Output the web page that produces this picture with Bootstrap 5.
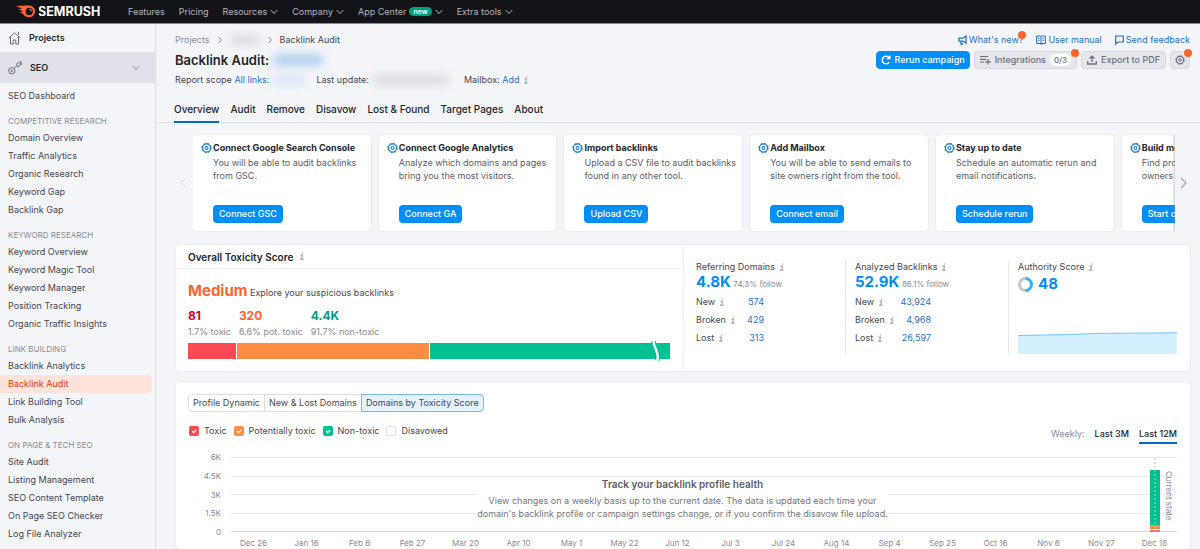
<!DOCTYPE html>
<html lang="en">
<head>
<meta charset="utf-8">
<meta name="viewport" content="width=device-width, initial-scale=1">
<title>Backlink Audit</title>
<link href="https://cdn.jsdelivr.net/npm/bootstrap@5.3.0/dist/css/bootstrap.min.css" rel="stylesheet">
<style>
body{font-family:Inter,"Liberation Sans",sans-serif;font-size:9px;line-height:12px;color:#45474f;background:#f4f5f9;overflow:hidden}
a{text-decoration:none;color:#2273c9}
svg{display:block;flex:none}
.ink{color:#22252c}
.grey{color:#878a95}
.hint{color:#a4a7b3;width:6px;height:9px}
.topbar{background:#131417;height:24px;border-bottom:1px solid #8a8c93;padding-left:16px}
.topbar a{color:#b4b6bd;gap:3px}
.topbar ul{gap:14px;margin-left:23px}
.pill-new{background:#009f81;color:#fff;border-radius:6px;font-size:7px;line-height:9px;padding:0 4px;font-weight:600}
.side{flex:0 0 156px;border-right:1px solid #dcdee6}
.side-main{height:28px;padding-left:8px;gap:8px;font-weight:600;color:#22252c}
.side-seo{background:#e0e1e9;height:31px;padding-right:15px}
.side h6{font-size:8px;line-height:16px;margin:0;padding:8px 0 0 8px;font-weight:400;color:#878a95}
.side-item{display:block;line-height:18px;padding-left:8px;color:#45474f}
.side-item.current{color:#dd3b0a;background:#ffe3da;border-radius:0 4px 4px 0;margin-right:3px}
.inset{padding:0 10px 0 19px}
.crumbs{height:20px;margin-top:6px}
.trail{gap:7px}
.help-links{gap:13px}
.help-links a{gap:2px}
.smudge{display:inline-block;height:10px;filter:blur(4px);border-radius:4px;background:#dbdce1}
.smudge.site{width:30px}
.smudge.name{width:50px;height:12px;background:#b4d3ee}
.smudge.scope{width:32px;background:#d8e6f5;margin:0 11px 0 4px}
.smudge.date{width:76px;margin:0 15px 0 4px}
h1{font-size:13px;line-height:20px;font-weight:600;margin:0}
.meta-line{height:20px}
.tool-row{gap:4px}
.tool-btn{height:18px;border-radius:4px;border:1px solid #d6d8e0;background:#e6e7ed;color:#6c6e79;font-weight:500;font-size:9px;line-height:12px;padding:0 5px;gap:4px}
.tool-btn.go{background:#008ff8;border-color:#008ff8;color:#fff;padding:0 4px}
.count{background:#fff;border-radius:6px;padding:0 4px;font-size:8px}
.dot{position:absolute;width:8px;height:8px;border-radius:50%;background:#ff642d;top:-3px;right:-3px}
.tabs{border-bottom:1px solid #e0e2ea;padding-left:18px;gap:11px;margin-top:10px;font-size:10px;font-weight:500}
.tabs a{color:#22252c;line-height:18px;padding-bottom:3px;border-bottom:2px solid transparent;margin-bottom:-1px}
.tabs a.current{border-color:#006dca}
.carousel-line{margin:11px 7px 0 19px;height:98px}
.arrow{flex:0 0 18px;background:none;border:0;padding:0 0 0 4px}
.strip{gap:8px;overflow:hidden;padding:1px 0}
.tip{flex:0 0 18.1%;background:#fff;border-radius:4px;box-shadow:0 0 2px #d3d6df;padding:7px 3px 8px 8px;gap:1px}
.tip>svg{color:#0f7ad8}
.tip h2{font-size:9px;line-height:12px;font-weight:700;color:#22252c;margin:0 0 2px;white-space:nowrap}
.tip p{margin:0;line-height:13px;color:#5b5d67}
.tip-btn{background:#008ff8;color:#fff;border:0;border-radius:4px;height:18px;padding:0 6px;font-weight:500;line-height:12px;white-space:nowrap}
.fade-edge{position:absolute;right:0;top:1px;bottom:1px;width:3px;background:linear-gradient(90deg,transparent,#8a8d9860)}
.panel{background:#fff;border-radius:4px;box-shadow:0 0 2px #d3d6df;margin:0 10px 0 20px}
.score{margin-top:13px;height:126px}
.score-head{height:24px;border-bottom:1px solid #eff0f4;padding-left:12px;font-size:10px;font-weight:600;gap:6px}
.level-line{padding:13px 0 0 12px}
.level{font-size:15px;line-height:18px;font-weight:700;color:#ff642d}
.parts{gap:8px;padding:8px 0 0 12px;line-height:16px}
.num{font-size:12px;font-weight:700}
.big{font-size:15px;line-height:18px;font-weight:700;color:#008ff8}
.small-note{font-size:8px;color:#878a95}
.bar{height:16px;gap:1px;margin:3px 13px 0 12px;position:relative}
.bar svg{position:absolute;right:9px;top:-2px}
.stats{display:grid;grid-template-columns:149fr 163fr 169fr;padding:16px 13px 17px 12px;border-left:1px solid #eff0f4}
.stats>div+div{border-left:1px solid #e6e8ee;padding-left:9px}
.stat-table{margin-top:2px;width:68px}
.stat-table.wide{width:76px}
.stat-table td{padding:0;height:18px}
.stat-table td:last-child{text-align:right}
.switch-group{margin-left:12px}
.switch-group button{background:#fff;border:1px solid #dcdee6;height:18px;line-height:12px;padding:0 4px;color:#45474f;margin-right:-1px}
.switch-group button:first-child{border-radius:4px 0 0 4px}
.switch-group button:last-child{border-radius:0 4px 4px 0;background:#e3f2ff;border-color:#7db6ea}
.trend{margin-top:11px;padding-top:12px}
.tick{appearance:none;width:10px;height:10px;border-radius:2px;border:1px solid #cfe5fb;margin:0;flex:none}
.tick:checked{border:0;background:var(--c) url("data:image/svg+xml,%3Csvg xmlns='http://www.w3.org/2000/svg' viewBox='0 0 10 10'%3E%3Cpath d='M3 5l1.6 1.6L7.2 4' fill='none' stroke='white' stroke-width='1.2'/%3E%3C/svg%3E")}
.legend-row{margin:13px 13px 0 13px}
.legend-keys{gap:7px;height:12px}
.legend-keys label{gap:5px}
.ranges{gap:10px;margin-top:3px}
.range{font-weight:500;color:#22252c;padding-bottom:2px;border-bottom:2px solid transparent}
.range.current{border-color:#006dca}
.plot{margin:8px 13px 0 12px;font-size:8px;color:#878a95}
.y-axis{width:33px;height:85px;line-height:10px}
.grid-area{margin:5px 0 5px 10px;height:75px;position:relative}
.grid-area hr{margin:0;border:0;border-top:1px solid #e8eaf0;opacity:1}
.grid-area hr:last-of-type{border-color:#d5d7df}
.note{position:absolute;inset:21px 43px auto 0;line-height:13px;font-size:9px;color:#75777f}
.note strong{display:block;font-size:10px;font-weight:600;color:#5b5d67;margin-bottom:3px}
.note span{display:inline-block;background:#fff}
.stack{position:absolute;right:17px;bottom:0;width:10px;height:62px}
.guide{position:absolute;right:21px;top:1px;bottom:0;border-left:2px dotted #b9c9cf80}
.state{position:absolute;right:2px;top:14px;writing-mode:vertical-rl;font-size:8px;line-height:12px}
.months{display:grid;grid-template-columns:repeat(18,1fr);margin:0 -4px 0 39px;text-align:center;white-space:nowrap}
</style>
<script src="https://cdn.jsdelivr.net/npm/bootstrap@5.3.0/dist/js/bootstrap.bundle.min.js"></script>
</head>
<body class="d-flex flex-column vh-100">
<svg width="0" height="0" class="position-absolute">
<symbol id="down" viewBox="0 0 8 6"><path d="M.7 1L4 4.500 7.300 1" fill="none" stroke="currentColor"/></symbol>
<symbol id="right" viewBox="0 0 6 8"><path d="M1.500 1L4.500 4l-3 3" fill="none" stroke="currentColor"/></symbol>
<symbol id="info" viewBox="0 0 6 9"><path d="M1.500 3.100h1.900L2.800 7M1 7.200h3.600M2.900 1h1.500" fill="none" stroke="currentColor" stroke-width="1.200"/></symbol>
<symbol id="gear" viewBox="0 0 12 12"><circle cx="6" cy="6" r="4.400" fill="none" stroke="currentColor" stroke-width="1.300"/><circle cx="6" cy="6" r="5.200" fill="none" stroke="currentColor" stroke-width="1" stroke-dasharray="2.040 2.040"/><circle cx="6" cy="6" r="1.600" fill="none" stroke="currentColor" stroke-width="1.200"/></symbol>
</svg>

<header class="topbar d-flex align-items-center flex-shrink-0">
<a href="#" class="d-flex align-items-center" aria-label="Semrush">
<svg width="20" height="13" viewBox="0 0 20 13"><path fill="#ff642d" d="M0 1.200C4 .8 9 .6 13 .6c3.500 0 6 2.600 6 5.800s-2.500 5.800-5.800 5.800c-3 0-5.200-1.700-6.200-3.200-1-.9-2.300-1.500-3.600-2.100 1.300 0 2.100.1 3.200.3C5.900 5.100 3 4.400 1.600 4c1.700-.2 3.300-.1 4.500.1C4.500 2.700 2 1.700 0 1.200z"/><circle cx="13.200" cy="6.400" r="3.600" fill="#131417"/><path d="M13.300 4.400c1.100 0 2 .8 2 1.900" stroke="#ff642d" stroke-width="1.100" fill="none"/></svg>
<svg width="66" height="13" viewBox="0 0 66 13" role="img" aria-label="Semrush"><text x="-1" y="10.500" font-family="Inter" font-weight="700" font-size="12.500" fill="#fff">SEMRUSH</text></svg>
</a>
<ul class="list-unstyled d-flex mb-0">
<li><a href="#">Features</a></li>
<li><a href="#">Pricing</a></li>
<li><a href="#" class="d-flex align-items-center">Resources <svg width="8" height="6"><use href="#down"/></svg></a></li>
<li><a href="#" class="d-flex align-items-center">Company <svg width="8" height="6"><use href="#down"/></svg></a></li>
<li><a href="#" class="d-flex align-items-center">App Center <span class="pill-new">new</span> <svg width="8" height="6"><use href="#down"/></svg></a></li>
<li><a href="#" class="d-flex align-items-center">Extra tools <svg width="8" height="6"><use href="#down"/></svg></a></li>
</ul>
</header>

<div class="d-flex flex-grow-1" style="min-height:0">
<nav class="side">
<a href="#" class="side-main d-flex align-items-center"><svg width="13" height="14" viewBox="0 0 13 14" fill="none" stroke="#696c77"><path d="M.7 7L6.500 2l5.800 5M2.500 6v7h2.700V9h2.600v4h2.700V6M10.500 4V.8"/></svg>Projects</a>
<a href="#" class="side-main side-seo d-flex align-items-center"><svg width="14" height="14" viewBox="0 0 14 14" fill="none" stroke="#696c77"><circle cx="3.800" cy="9.700" r="3.200"/><circle cx="3.800" cy="9.700" r=".8"/><path d="M6.500 6.800l2.300-2M8.300 3.200l2 3 3-4.400-.9-1.100zM12.600.7l1 3.200"/></svg><span class="flex-grow-1">SEO</span><svg width="8" height="6" class="grey"><use href="#down"/></svg></a>
<div class="pt-1"><a href="#" class="side-item">SEO Dashboard</a></div>
<h6>COMPETITIVE RESEARCH</h6>
<a href="#" class="side-item">Domain Overview</a><a href="#" class="side-item">Traffic Analytics</a><a href="#" class="side-item">Organic Research</a><a href="#" class="side-item">Keyword Gap</a><a href="#" class="side-item">Backlink Gap</a>
<h6>KEYWORD RESEARCH</h6>
<a href="#" class="side-item">Keyword Overview</a><a href="#" class="side-item">Keyword Magic Tool</a><a href="#" class="side-item">Keyword Manager</a><a href="#" class="side-item">Position Tracking</a><a href="#" class="side-item">Organic Traffic Insights</a>
<h6>LINK BUILDING</h6>
<a href="#" class="side-item">Backlink Analytics</a><a href="#" class="side-item current">Backlink Audit</a><a href="#" class="side-item">Link Building Tool</a><a href="#" class="side-item">Bulk Analysis</a>
<h6>ON PAGE &amp; TECH SEO</h6>
<a href="#" class="side-item">Site Audit</a><a href="#" class="side-item">Listing Management</a><a href="#" class="side-item">SEO Content Template</a><a href="#" class="side-item">On Page SEO Checker</a><a href="#" class="side-item">Log File Analyzer</a>
</nav>

<main class="d-flex flex-column flex-grow-1" style="min-width:0">
<div class="inset">
<div class="crumbs d-flex align-items-center justify-content-between">
<div class="trail d-flex align-items-center"><a href="#" class="grey">Projects</a><svg class="grey" width="6" height="8"><use href="#right"/></svg><span class="smudge site"></span><svg class="grey" width="6" height="8"><use href="#right"/></svg><span>Backlink Audit</span></div>
<div class="help-links d-flex align-items-center">
<a href="#" class="d-flex align-items-center position-relative"><svg width="9" height="10" viewBox="0 0 9 10" fill="none" stroke="currentColor" stroke-width="1.300"><path d="M8 1v7L5 6.200H1V3.200h4L8 1zM3 6.200V9h2"/></svg>What's new?<span class="dot"></span></a>
<a href="#" class="d-flex align-items-center"><svg width="10" height="10" viewBox="0 0 10 10" fill="none" stroke="currentColor"><path d="M.6 1h3.600l.8.700.8-.7h3.600v7.500H.6zM5 1.500V10M2 3.300h1.500M2 5.300h1.500M6.500 3.300H8M6.500 5.300H8"/></svg>User manual</a>
<a href="#" class="d-flex align-items-center"><svg width="9" height="10" viewBox="0 0 9 10" fill="none" stroke="currentColor" stroke-width="1.200"><path d="M.7 1h7.600v6H3L.7 9z"/></svg>Send feedback</a>
</div>
</div>
<div class="d-flex align-items-center justify-content-between">
<h1 class="ink d-flex align-items-center gap-1">Backlink Audit: <span class="smudge name"></span></h1>
<div class="tool-row d-flex">
<button class="tool-btn go d-flex align-items-center"><svg width="10" height="10" viewBox="0 0 10 10" fill="none" stroke="currentColor" stroke-width="1.400"><path d="M8.300 7A3.800 3.800 0 1 1 7.600 2.300L8.500 3.300M8.800.6v3H5.800"/></svg>Rerun campaign</button>
<button class="tool-btn d-flex align-items-center position-relative"><svg width="11" height="10" viewBox="0 0 11 10" fill="none" stroke="currentColor" stroke-width="1.200"><path d="M0 1.500h8M0 4.300h6M0 7h4M8 4v5.500M5.300 6.800h5.400"/></svg>Integrations <span class="count">0/3</span><span class="dot"></span></button>
<button class="tool-btn d-flex align-items-center"><svg width="10" height="10" viewBox="0 0 10 10" fill="none" stroke="currentColor" stroke-width="1.300"><path d="M.7 6v3h8.600V6M5 7V1.200M2.500 3.500L5 1.100l2.500 2.400"/></svg>Export to PDF</button>
<button class="tool-btn d-flex align-items-center position-relative px-1" aria-label="Settings"><svg width="10" height="10"><use href="#gear"/></svg><span class="dot"></span></button>
</div>
</div>
<div class="meta-line d-flex align-items-center">
<span>Report scope <a href="#">All links:</a></span><span class="smudge scope"></span>
<span>Last update:</span><span class="smudge date"></span>
<span>Mailbox: <a href="#">Add</a></span><svg class="hint ms-1"><use href="#info"/></svg>
</div>
</div>
<nav class="tabs d-flex"><a href="#" class="current">Overview</a><a href="#">Audit</a><a href="#">Remove</a><a href="#">Disavow</a><a href="#">Lost &amp; Found</a><a href="#">Target Pages</a><a href="#">About</a></nav>

<div class="carousel-line d-flex flex-shrink-0">
<button class="arrow" aria-label="Previous"><svg width="9" height="12" viewBox="0 0 9 12" fill="none" stroke="#d5d7df"><path d="M7 1L2 6l5 5"/></svg></button>
<div class="position-relative flex-grow-1" style="min-width:0">
<div class="strip d-flex h-100">
<div class="tip d-flex"><svg width="11" height="12"><use href="#gear"/></svg><div class="d-flex flex-column align-items-start"><h2>Connect Google Search Console</h2><p>You will be able to audit backlinks from GSC.</p><button class="tip-btn mt-auto">Connect GSC</button></div></div>
<div class="tip d-flex"><svg width="11" height="12"><use href="#gear"/></svg><div class="d-flex flex-column align-items-start"><h2>Connect Google Analytics</h2><p>Analyze which domains and pages bring you the most visitors.</p><button class="tip-btn mt-auto">Connect GA</button></div></div>
<div class="tip d-flex"><svg width="11" height="12"><use href="#gear"/></svg><div class="d-flex flex-column align-items-start"><h2>Import backlinks</h2><p>Upload a CSV file to audit backlinks found in any other tool.</p><button class="tip-btn mt-auto">Upload CSV</button></div></div>
<div class="tip d-flex"><svg width="11" height="12"><use href="#gear"/></svg><div class="d-flex flex-column align-items-start"><h2>Add Mailbox</h2><p>You will be able to send emails to site owners right from the tool.</p><button class="tip-btn mt-auto">Connect email</button></div></div>
<div class="tip d-flex"><svg width="11" height="12"><use href="#gear"/></svg><div class="d-flex flex-column align-items-start"><h2>Stay up to date</h2><p>Schedule an automatic rerun and email notifications.</p><button class="tip-btn mt-auto">Schedule rerun</button></div></div>
<div class="tip d-flex"><svg width="11" height="12"><use href="#gear"/></svg><div class="d-flex flex-column align-items-start"><h2>Build more links</h2><p>Find prospects and<br>owners by email.</p><button class="tip-btn mt-auto">Start outreach</button></div></div>
</div>
<div class="fade-edge"></div>
</div>
<button class="arrow" aria-label="Next"><svg width="9" height="12" viewBox="0 0 9 12" fill="none" stroke="#a3a6b1" stroke-width="1.300"><path d="M2 1l5 5-5 5"/></svg></button>
</div>

<section class="panel score d-flex flex-shrink-0">
<div class="w-50">
<div class="score-head ink d-flex align-items-center">Overall Toxicity Score <svg class="hint"><use href="#info"/></svg></div>
<div class="level-line"><span class="level">Medium</span> Explore your suspicious backlinks</div>
<div class="parts d-flex">
<div><div class="num" style="color:#d1002f">81</div><div class="grey">1.7% toxic</div></div>
<div><div class="num" style="color:#ff642d">320</div><div class="grey">6.6% pot. toxic</div></div>
<div><div class="num" style="color:#009f81">4.4K</div><div class="grey">91.7% non-toxic</div></div>
</div>
<div class="bar d-flex"><div style="width:10%;background:#ff4953"></div><div style="width:40%;background:#ff8c43"></div><div style="width:50%;background:#00c192"></div><svg width="12" height="20" viewBox="0 0 12 20" fill="none"><path d="M4.500 0c0 8 7 12 3.500 20" stroke="#00c192" stroke-width="4.500"/><path d="M4.500 0c0 8 7 12 3.500 20" stroke="#fff" stroke-width="2.500"/></svg></div>
</div>
<div class="w-50 stats">
<div><div class="d-flex gap-1 align-items-center">Referring Domains <svg class="hint"><use href="#info"/></svg></div><div><span class="big">4.8K</span> <span class="small-note">74.3% follow</span></div>
<table class="stat-table"><tr><td><span class="d-inline-flex gap-1 align-items-center">New <svg class="hint"><use href="#info"/></svg></span></td><td><a href="#">574</a></td></tr><tr><td><span class="d-inline-flex gap-1 align-items-center">Broken <svg class="hint"><use href="#info"/></svg></span></td><td><a href="#">429</a></td></tr><tr><td><span class="d-inline-flex gap-1 align-items-center">Lost <svg class="hint"><use href="#info"/></svg></span></td><td><a href="#">313</a></td></tr></table></div>
<div><div class="d-flex gap-1 align-items-center">Analyzed Backlinks <svg class="hint"><use href="#info"/></svg></div><div><span class="big">52.9K</span> <span class="small-note">86.1% follow</span></div>
<table class="stat-table wide"><tr><td><span class="d-inline-flex gap-1 align-items-center">New <svg class="hint"><use href="#info"/></svg></span></td><td><a href="#">43,924</a></td></tr><tr><td><span class="d-inline-flex gap-1 align-items-center">Broken <svg class="hint"><use href="#info"/></svg></span></td><td><a href="#">4,968</a></td></tr><tr><td><span class="d-inline-flex gap-1 align-items-center">Lost <svg class="hint"><use href="#info"/></svg></span></td><td><a href="#">26,597</a></td></tr></table></div>
<div class="d-flex flex-column"><div class="d-flex gap-1 align-items-center">Authority Score <svg class="hint"><use href="#info"/></svg></div><div class="d-flex align-items-center" style="gap:5px;margin-top:2px"><svg width="15" height="15" viewBox="0 0 15 15" fill="none" stroke-width="3"><path d="M7.500 1.500a6 6 0 0 0 0 12" stroke="#c4c7cf"/><path d="M7.500 1.500a6 6 0 0 1 0 12" stroke="#2bb3ff"/></svg><span class="big">48</span></div>
<svg class="mt-auto w-100" height="22" viewBox="0 0 160 22" preserveAspectRatio="none"><path d="M0 3.500L55 2.500 75 1.500 160 .8V22H0z" fill="#d4efff"/><path d="M0 3.500L55 2.500 75 1.500 160 .8" fill="none" stroke="#6cc7fb"/></svg></div>
</div>
</section>

<section class="panel trend flex-grow-1">
<div class="switch-group d-flex"><button>Profile Dynamic</button><button>New &amp; Lost Domains</button><button>Domains by Toxicity Score</button></div>
<div class="d-flex justify-content-between legend-row">
<div class="legend-keys d-flex">
<label class="d-flex align-items-center"><input type="checkbox" class="tick" checked style="--c:#ff4953">Toxic</label>
<label class="d-flex align-items-center"><input type="checkbox" class="tick" checked style="--c:#ff8c43">Potentially toxic</label>
<label class="d-flex align-items-center"><input type="checkbox" class="tick" checked style="--c:#00c192">Non-toxic</label>
<label class="d-flex align-items-center"><input type="checkbox" class="tick">Disavowed</label>
</div>
<div class="ranges d-flex"><span class="grey">Weekly:</span><a href="#" class="range">Last 3M</a><a href="#" class="range current">Last 12M</a></div>
</div>
<div class="plot">
<div class="d-flex"><div class="y-axis d-flex flex-column justify-content-between text-end"><span>6K</span><span>4.5K</span><span>3K</span><span>1.5K</span><span>0</span></div>
<div class="grid-area flex-grow-1 d-flex flex-column justify-content-between"><hr><hr><hr><hr><hr>
<div class="note text-center"><strong>Track your backlink profile health</strong><span>View changes on a weekly basis up to the current date. The data is updated each time your<br>domain's backlink profile or campaign settings change, or if you confirm the disavow file upload.</span></div>
<div class="stack d-flex flex-column"><div class="flex-grow-1" style="background:#00c192"></div><div style="height:4px;background:#ff8c43"></div><div style="height:2px;background:#ff6a70;margin-top:1px"></div></div><div class="guide"></div><div class="state">Current state</div>
</div></div>
<div class="months"><span>Dec 26</span><span>Jan 16</span><span>Feb 6</span><span>Feb 27</span><span>Mar 20</span><span>Apr 10</span><span>May 1</span><span>May 22</span><span>Jun 12</span><span>Jul 3</span><span>Jul 24</span><span>Aug 14</span><span>Sep 4</span><span>Sep 25</span><span>Oct 16</span><span>Nov 6</span><span>Nov 27</span><span>Dec 18</span></div>
</div>
</section>
</main>
</div>
</body>
</html></script>
